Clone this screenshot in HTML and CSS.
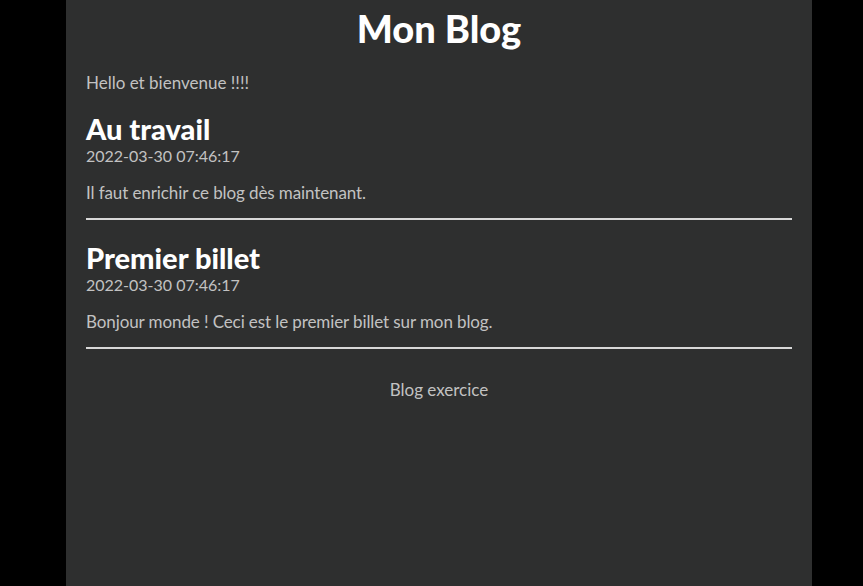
FILE: index.html
```html
<!DOCTYPE html>
<html lang="fr">
<head>
<meta charset="utf-8">
<title>Mon Blog</title>
<link rel="stylesheet" href="styles.css">
</head>
<body>
<div class="page">
  <h1 class="title">Mon Blog</h1>
  <p class="intro">Hello et bienvenue !!!!</p>
  <article class="post">
    <h2 class="post-title">Au travail</h2>
    <div class="post-date">2022-03-30 07:46:17</div>
    <p class="post-body">Il faut enrichir ce blog dès maintenant.</p>
  </article>
  <hr class="sep">
  <article class="post">
    <h2 class="post-title">Premier billet</h2>
    <div class="post-date">2022-03-30 07:46:17</div>
    <p class="post-body">Bonjour monde ! Ceci est le premier billet sur mon blog.</p>
  </article>
  <hr class="sep">
  <footer class="footer">Blog exercice</footer>
</div>
</body>
</html>
```
FILE: styles.css
```css
html, body {
  margin: 0;
  padding: 0;
  height: 100%;
  background: #000;
}
body {
  box-sizing: border-box;
  padding-left: 15px;
  font-family: "Lato", "Liberation Sans", sans-serif;
  color: #c2c2c2;
}
.page {
  width: 746px;
  min-height: 100%;
  margin: 0 auto;
  box-sizing: border-box;
  background: #2e2f2f;
  padding: 6px 20px 20px;
}
.title {
  margin: 0;
  text-align: center;
  color: #fff;
  font-size: 38px;
  font-weight: 900;
  line-height: 44px;
}
.intro {
  margin: 22px 0 0;
  font-size: 17px;
  line-height: 22px;
}
.post {
  margin-top: 19px;
}
.sep + .post {
  margin-top: 22px;
}
.post-title {
  margin: 0;
  color: #fff;
  font-size: 29px;
  font-weight: 900;
  line-height: 32px;
}
.post-date {
  font-size: 16px;
  line-height: 22px;
}
.post-body {
  margin: 15px 0 0;
  font-size: 17px;
  line-height: 22px;
  letter-spacing: -0.1px;
}
.sep {
  margin: 14px 0 0;
  border: 0;
  height: 2px;
  background: #d8d8d8;
}
.footer {
  margin-top: 30px;
  text-align: center;
  font-size: 17px;
  line-height: 22px;
}
```
